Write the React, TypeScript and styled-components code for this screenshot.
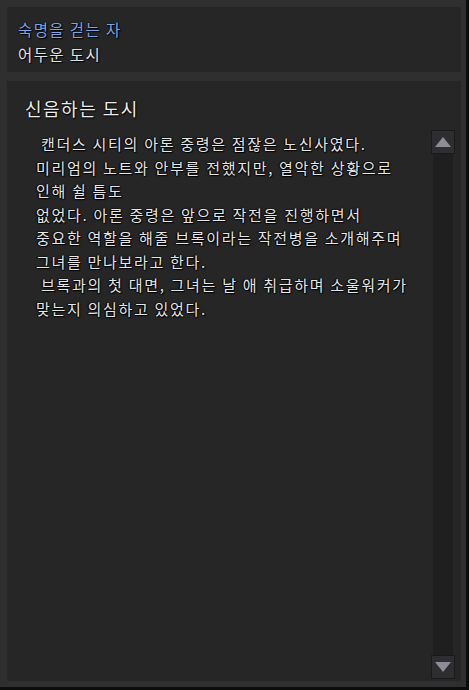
import React from "react";
import styled, { createGlobalStyle } from "styled-components";

const GlobalStyle = createGlobalStyle`
  html, body {
    margin: 0;
    padding: 0;
    background: #0c0c0c;
  }
  body {
    font-family: "Noto Sans CJK KR", "Noto Sans", sans-serif;
  }
`;

const Frame = styled.div`
  width: 466px;
  height: 687px;
  box-sizing: border-box;
  background: #2f2f2f;
  padding: 7px 5px 6px 7px;
  display: flex;
  flex-direction: column;
  gap: 9px;
`;

const Panel = styled.div`
  background: #262626;
`;

const QuestHeader = styled(Panel)`
  height: 65px;
  box-sizing: border-box;
  padding: 10px 11px 0;
  display: flex;
  flex-direction: column;
  gap: 1px;
`;

const Label = styled.div<{ $tone: "blue" | "white" }>`
  font-size: 15.5px;
  line-height: 24px;
  letter-spacing: 1.4px;
  color: ${(p) => (p.$tone === "blue" ? "#78a6e6" : "#e4e4e4")};
  text-shadow: 0 0 2px #000, 1px 1px 1px #000;
`;

const Body = styled(Panel)`
  flex: 1;
  display: flex;
  flex-direction: column;
  padding: 14px 6px 2px 18px;
  min-height: 0;
`;

const Title = styled.div`
  font-size: 18px;
  line-height: 26px;
  letter-spacing: 1.5px;
  color: #ececec;
  text-shadow: 0 0 2px #000, 1px 1px 1px #000;
`;

const Content = styled.div`
  flex: 1;
  display: flex;
  gap: 8px;
  margin-top: 9px;
  min-height: 0;
`;

const Story = styled.div`
  flex: 1;
  padding: 2px 0 0 11px;
  font-size: 15px;
  line-height: 23.5px;
  letter-spacing: 1.7px;
  color: #e6e6e6;
  white-space: pre;
  text-shadow: 0 0 2px #000, 1px 1px 1px #000, -1px 0 1px #000;
`;

const Scrollbar = styled.div`
  width: 24px;
  display: flex;
  flex-direction: column;
  align-items: center;
`;

const Track = styled.div`
  flex: 1;
  width: 20px;
  background: #1f1f1f;
`;

const ArrowButton = styled.div`
  width: 24px;
  height: 24px;
  box-sizing: border-box;
  border: 1px solid #1a1a1a;
  background: #2e2e31;
  display: flex;
  align-items: center;
  justify-content: center;
`;

const Arrow = ({ dir }: { dir: "up" | "down" }) => (
  <svg width="16" height="10" viewBox="0 0 16 10">
    {dir === "up" ? (
      <polygon points="8,0 16,10 0,10" fill="#8e8c94" />
    ) : (
      <polygon points="0,0 16,0 8,10" fill="#8e8c94" />
    )}
  </svg>
);

const storyLines = [
  " 캔더스 시티의 아론 중령은 점잖은 노신사였다.",
  "미리엄의 노트와 안부를 전했지만, 열악한 상황으로",
  "인해 쉴 틈도",
  "없었다. 아론 중령은 앞으로 작전을 진행하면서",
  "중요한 역할을 해줄 브록이라는 작전병을 소개해주며",
  "그녀를 만나보라고 한다.",
  " 브록과의 첫 대면, 그녀는 날 애 취급하며 소울워커가",
  "맞는지 의심하고 있었다.",
];

const App: React.FC = () => {
  return (
    <>
      <GlobalStyle />
      <Frame>
        <QuestHeader>
          <Label $tone="blue">숙명을 걷는 자</Label>
          <Label $tone="white">어두운 도시</Label>
        </QuestHeader>
        <Body>
          <Title>신음하는 도시</Title>
          <Content>
            <Story>{storyLines.join("\n")}</Story>
            <Scrollbar>
              <ArrowButton>
                <Arrow dir="up" />
              </ArrowButton>
              <Track />
              <ArrowButton>
                <Arrow dir="down" />
              </ArrowButton>
            </Scrollbar>
          </Content>
        </Body>
      </Frame>
    </>
  );
};

export default App;
